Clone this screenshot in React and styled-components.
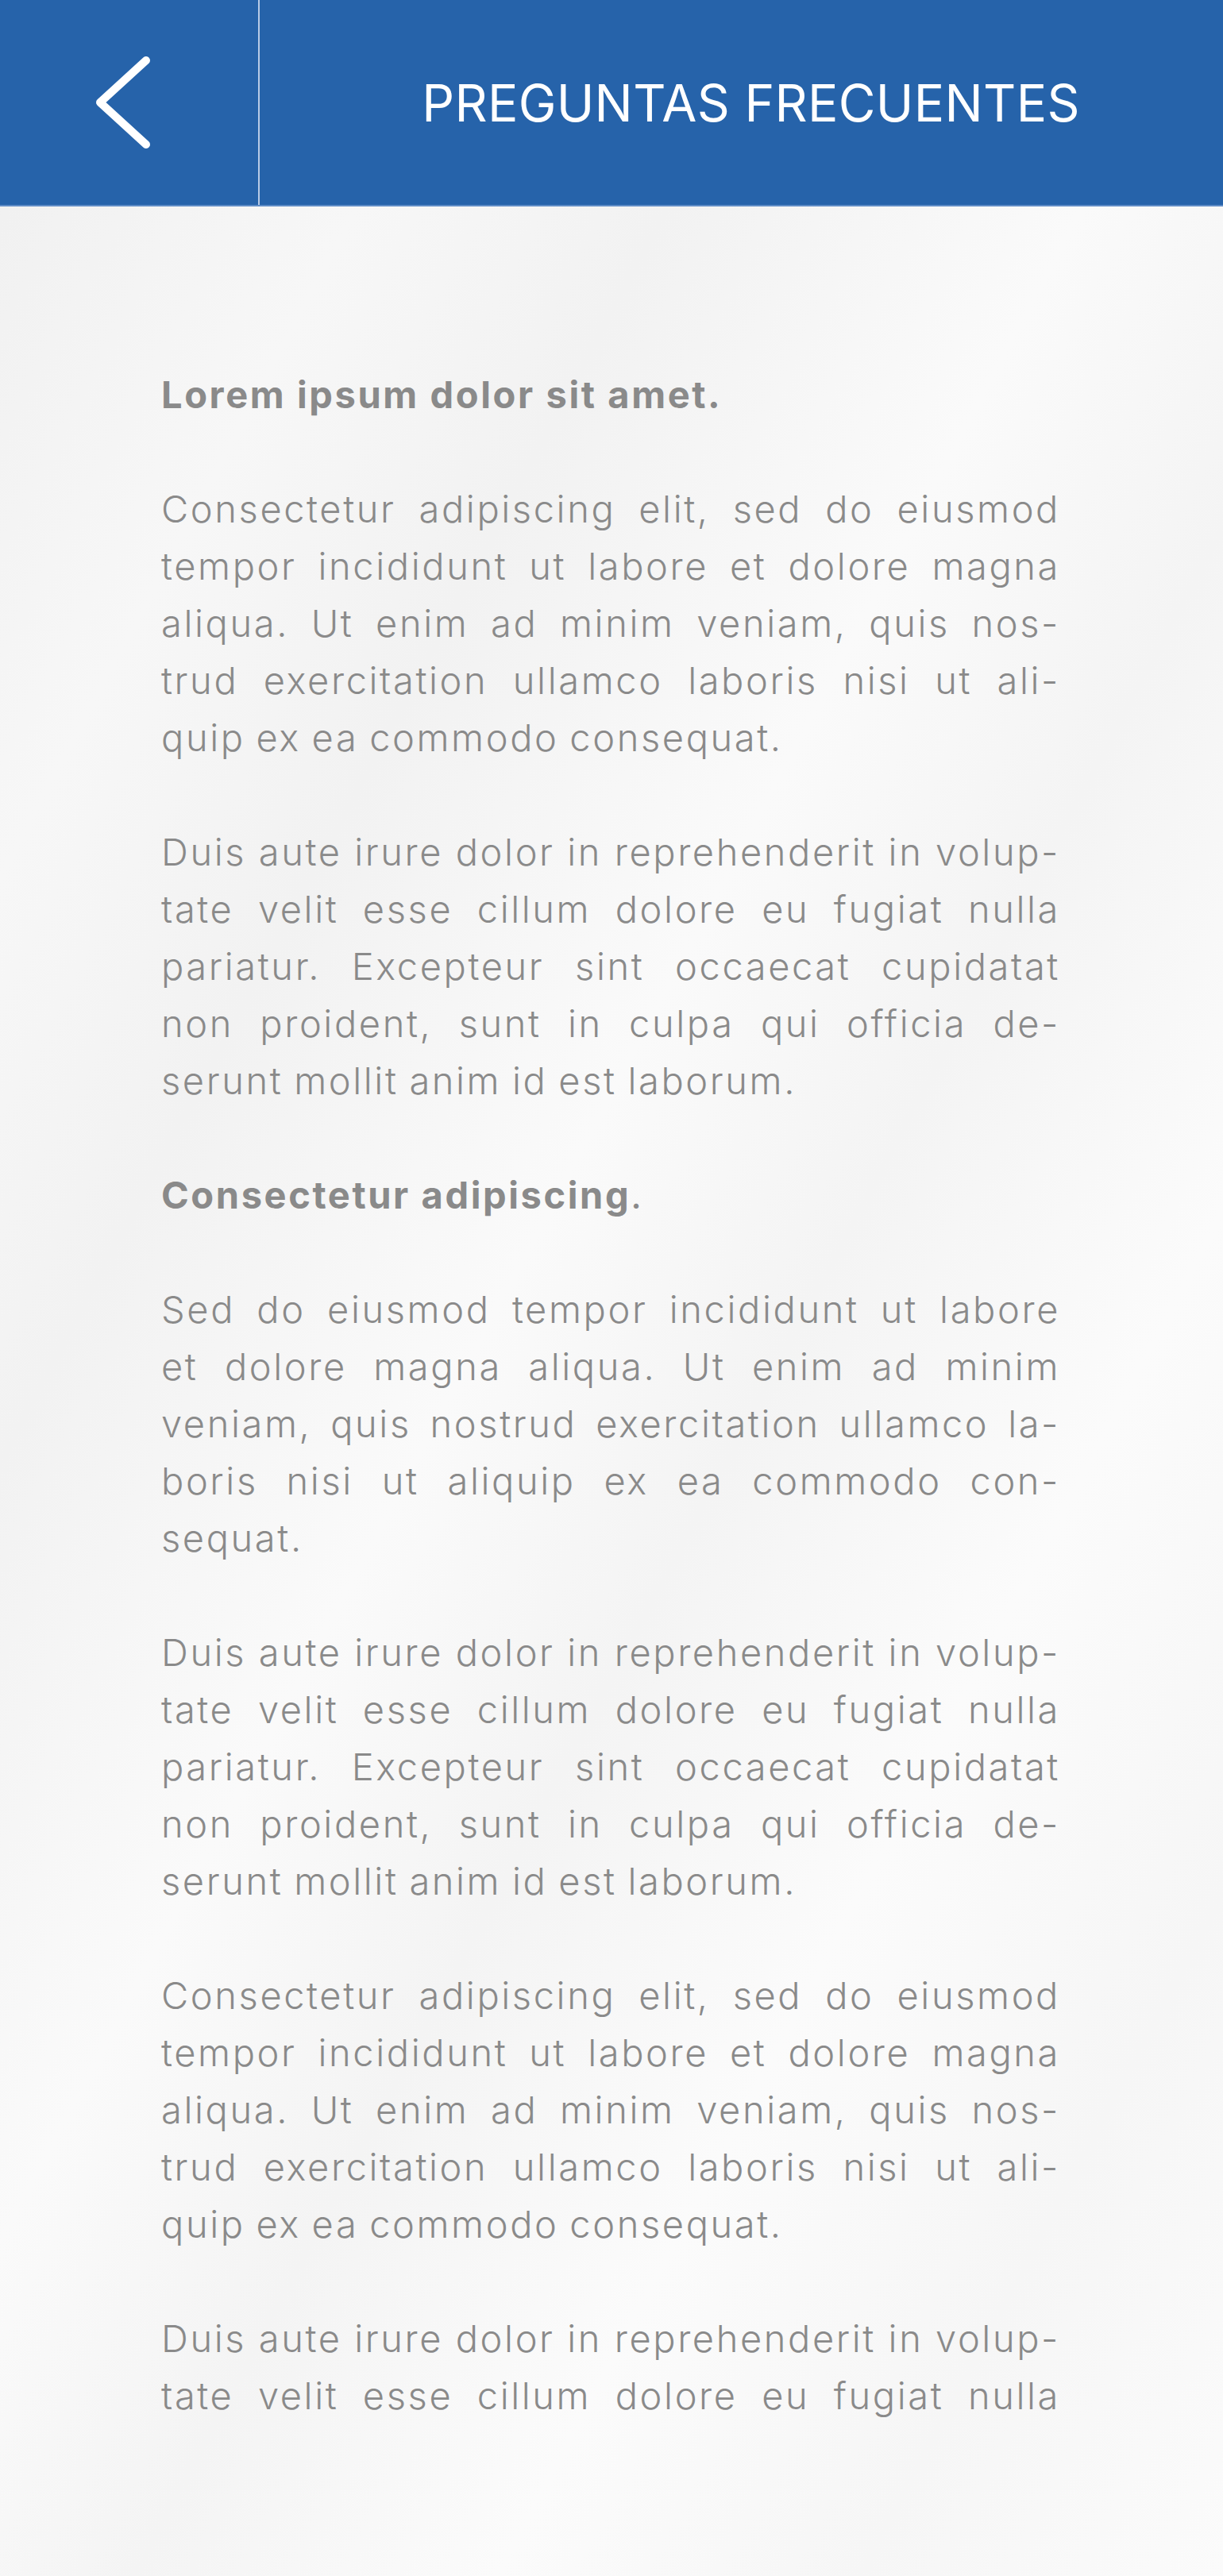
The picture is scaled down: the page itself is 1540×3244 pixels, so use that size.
import React from "react";
import styled, { createGlobalStyle } from "styled-components";

const colors = {
  main: "#2663aa",
  text: "#8a8a8a",
  white: "#ffffff",
};

const GlobalStyle = createGlobalStyle`
  html, body {
    margin: 0;
    padding: 0;
  }
  body {
    background: #f6f6f6;
    font-family: Inter, "Noto Sans", "Liberation Sans", sans-serif;
  }
`;

const Page = styled.div`
  min-height: 100vh;
  background: linear-gradient(
    118deg,
    #efefef 0%,
    #f7f7f7 18%,
    #f2f2f2 30%,
    #fafafa 46%,
    #f4f4f4 58%,
    #fbfbfb 72%,
    #f6f6f6 86%,
    #fbfbfb 100%
  );
`;

const Header = styled.header`
  display: grid;
  grid-template-columns: 327px 1fr;
  height: 260px;
  background: ${colors.main};
  border-bottom: 2px solid #5f8cc6;
  box-sizing: border-box;
`;

const BackButton = styled.div`
  display: flex;
  align-items: center;
  justify-content: center;
  padding-right: 16px;
  border-right: 2px solid #b9cbe6;
  cursor: pointer;
`;

const Title = styled.h1`
  margin: 0;
  display: flex;
  align-items: center;
  justify-content: center;
  padding-left: 24px;
  color: ${colors.white};
  font-family: Inter, "Noto Sans", sans-serif;
  font-weight: 400;
  font-size: 64px;
  letter-spacing: 0.3px;
`;

const Content = styled.main`
  padding: 201px 205px 0 203px;
  color: ${colors.text};
  font-family: Inter, "Noto Sans", sans-serif;
  font-weight: 300;
  font-size: 47px;
  line-height: 72px;
  letter-spacing: 2.6px;
  word-spacing: -2px;
`;

const Block = styled.div`
  margin-bottom: 72px;
`;

const Heading = styled.div`
  font-weight: 400;
  word-spacing: 0;
  strong {
    font-weight: 700;
    letter-spacing: 2.6px;
  }
`;

const Line = styled.span`
  display: block;
  white-space: nowrap;
  text-align: justify;
  text-align-last: ${(p) => (p.$last ? "left" : "justify")};
`;

const Paragraph = ({ lines, open }) => (
  <Block>
    {lines.map((l, i) => (
      <Line key={i} $last={!open && i === lines.length - 1}>
        {l}
      </Line>
    ))}
  </Block>
);

const p1 = [
  "Consectetur adipiscing elit, sed do eiusmod",
  "tempor incididunt ut labore et dolore magna",
  "aliqua. Ut enim ad minim veniam, quis nos-",
  "trud exercitation ullamco laboris nisi ut ali-",
  "quip ex ea commodo consequat.",
];

const p2 = [
  "Duis aute irure dolor in reprehenderit in volup-",
  "tate velit esse cillum dolore eu fugiat nulla",
  "pariatur. Excepteur sint occaecat cupidatat",
  "non proident, sunt in culpa qui officia de-",
  "serunt mollit anim id est laborum.",
];

const p3 = [
  "Sed do eiusmod tempor incididunt ut labore",
  "et dolore magna aliqua. Ut enim ad minim",
  "veniam, quis nostrud exercitation ullamco la-",
  "boris nisi ut aliquip ex ea commodo con-",
  "sequat.",
];

export default () => {
  return (
    <Page>
      <GlobalStyle />
      <Header>
        <BackButton>
          <svg width="74" height="122" viewBox="0 0 74 122" fill="none">
            <polyline
              points="66,8 8,61 66,114"
              stroke="#fff"
              strokeWidth="10"
              strokeLinecap="round"
              strokeLinejoin="round"
            />
          </svg>
        </BackButton>
        <Title>PREGUNTAS FRECUENTES</Title>
      </Header>
      <Content>
        <Block>
          <Heading>
            <strong>Lorem ipsum dolor sit amet.</strong>
          </Heading>
        </Block>
        <Paragraph lines={p1} />
        <Paragraph lines={p2} />
        <Block>
          <Heading>
            <strong>Consectetur adipiscing</strong>.
          </Heading>
        </Block>
        <Paragraph lines={p3} />
        <Paragraph lines={p2} />
        <Paragraph lines={p1} />
        <Paragraph lines={p2.slice(0, 2)} open />
      </Content>
    </Page>
  );
};
